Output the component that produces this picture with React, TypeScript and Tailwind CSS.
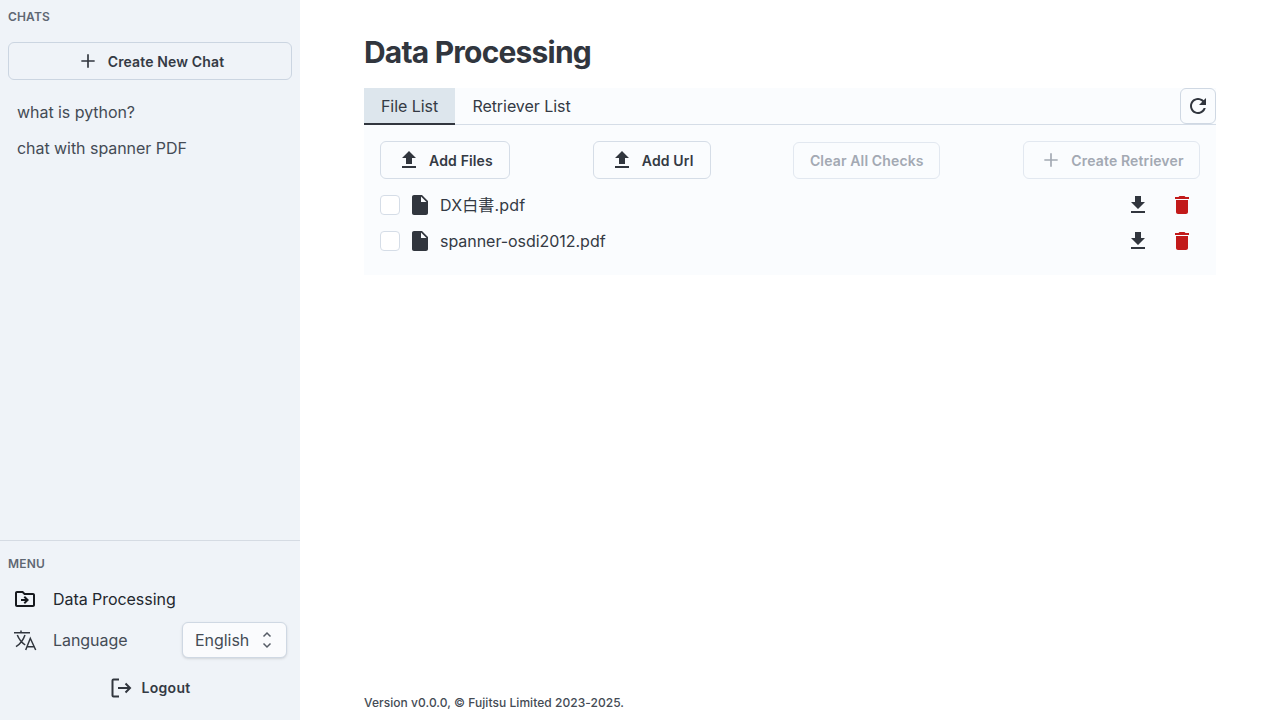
const P = {
  upload: "M9 16h6v-6h4l-7-7-7 7h4v6zm-4 2h14v2H5v-2z",
  download: "M19 9h-4V3H9v6H5l7 7 7-7zM5 18v2h14v-2H5z",
  del: "M6 19c0 1.1.9 2 2 2h8c1.1 0 2-.9 2-2V7H6v12zM19 4h-3.5l-1-1h-5l-1 1H5v2h14V4z",
  file: "M6 2c-1.1 0-1.99.9-1.99 2L4 20c0 1.1.89 2 1.99 2H18c1.1 0 2-.9 2-2V8l-6-6H6zm7 7V3.5L18.5 9H13z",
  refresh: "M17.65 6.35C16.2 4.9 14.21 4 12 4c-4.42 0-7.99 3.58-7.99 8s3.57 8 7.99 8c3.73 0 6.84-2.55 7.73-6h-2.08c-.82 2.33-3.04 4-5.65 4-3.31 0-6-2.69-6-6s2.69-6 6-6c1.66 0 3.14.69 4.22 1.78L13 11h7V4l-2.35 2.35z",
  folder: "M20 6h-8l-2-2H4c-1.1 0-1.99.9-1.99 2L2 18c0 1.1.9 2 2 2h16c1.1 0 2-.9 2-2V8c0-1.1-.9-2-2-2zm0 12H4V6h5.17l2 2H20v10zm-8.01-9l-1.41 1.41L12.16 12H8v2h4.16l-1.59 1.59L11.99 17 16 13.01 11.99 9z",
};

function Icon({ d, className }: { d: string; className: string }) {
  return (
    <svg viewBox="0 0 24 24" fill="currentColor" className={className}>
      <path d={d} />
    </svg>
  );
}

function Plus({ className }: { className: string }) {
  return (
    <svg viewBox="0 0 24 24" fill="none" stroke="currentColor" strokeWidth="2" className={className}>
      <path d="M12 4v16M4 12h16" />
    </svg>
  );
}

function FileRow({ name, className }: { name: string; className: string }) {
  return (
    <div className="flex items-center h-9">
      <span className="w-5 h-5 rounded-[4px] border border-[#d5dde7] bg-white" />
      <Icon d={P.file} className="w-6 h-6 ml-[8px] text-[#31363e]" />
      <span className={"ml-[8px] text-base text-[#343a44] " + className}>{name}</span>
      <span className="ml-auto mr-[6px] flex items-center gap-5">
        <Icon d={P.download} className="w-6 h-6 text-[#31363e]" />
        <Icon d={P.del} className="w-6 h-6 text-[#c21a1a]" />
      </span>
    </div>
  );
}

export default function App() {
  return (
    <div
      className="flex w-[1280px] h-[720px] overflow-hidden bg-white text-[#343a44] tracking-[-0.05px]"
      style={{ fontFamily: "Inter, 'Noto Sans CJK SC', sans-serif" }}
    >
      <aside className="w-[300px] h-full shrink-0 flex flex-col bg-[#eff3f8]">
        <div className="flex-1 px-2 pt-[10px]">
          <div className="text-xs leading-[14px] font-semibold text-[#5f6773] tracking-[0.15px]">CHATS</div>
          <button className="mt-[18px] w-full h-[38px] flex items-center justify-center gap-2.5 pl-0.5 rounded-md border border-[#cbd5e1] text-sm font-semibold tracking-[0.14px] text-[#343a44]">
            <Plus className="w-5 h-5 text-[#31363e]" />
            <span className="pt-px">Create New Chat</span>
          </button>
          <div className="mt-[14px] px-[9px] text-base leading-9 text-[#444b55]">
            <div>what is python?</div>
            <div>chat with spanner PDF</div>
          </div>
        </div>
        <div className="h-[180px] border-t border-[#d5dbe3] px-2 pt-4">
          <div className="text-xs leading-[14px] font-semibold text-[#5f6773] tracking-[0.15px]">MENU</div>
          <div className="mt-[8px] flex items-center h-[40px] px-[5px] gap-[16px] text-base text-[#23272e]">
            <Icon d={P.folder} className="w-6 h-6 text-[#16191e]" />
            Data Processing
          </div>
          <div className="mt-[3px] flex items-center h-[36px] px-[5px] gap-[16px] text-base text-[#444b55]">
            <svg viewBox="0 0 24 24" fill="none" stroke="currentColor" strokeWidth="1.5" className="w-6 h-6 text-[#31363e]">
              <path d="M1 4.8h16M8 2.5v2.3M12 7c-1.6 4.6-4.6 9-9 11.7M4.3 7c1.6 4 4.4 7.6 7.9 10M12.7 22l4.6-11.7L22.7 22M14.2 18.7h7" />
            </svg>
            Language
            <button className="ml-auto w-[105px] h-[36px] flex items-center justify-between pl-3 pr-[14px] rounded-md border border-[#cfd8e3] bg-[#fafbfd] text-base text-[#444b55] shadow-sm">
              English
              <svg viewBox="0 0 10 18" fill="none" stroke="currentColor" strokeWidth="1.5" className="w-[10px] h-[18px] text-[#555c66]">
                <path d="M1.5 5.5 5 2l3.5 3.5M1.5 12.5 5 16l3.5-3.5" />
              </svg>
            </button>
          </div>
          <button className="mt-[12px] w-full h-[36px] flex items-center justify-center gap-2 text-sm font-semibold tracking-[0.3px] text-[#343a44]">
            <svg viewBox="0 0 24 24" fill="none" stroke="currentColor" strokeWidth="2" className="w-6 h-6 text-[#31363e]">
              <path d="M10 3.5H4.5a1 1 0 0 0-1 1v15a1 1 0 0 0 1 1H10M9 12h12M16.5 7.5 21 12l-4.5 4.5" />
            </svg>
            Logout
          </button>
        </div>
      </aside>
      <main className="flex-1 flex flex-col px-16">
        <h1 className="mt-[32px] text-[30px] leading-10 font-bold tracking-[-0.8px] text-[#31363e]">Data Processing</h1>
        <section className="mt-[16px] bg-[#fafcfe]">
          <div className="flex items-stretch h-[37px] border-b border-[#d5dde7]">
            <div className="w-[91px] flex items-center justify-center bg-[#dde6ed] border-b-2 border-[#31363e] -mb-px text-base text-[#343a44]">File List</div>
            <div className="w-[133px] flex items-center justify-center text-base text-[#343a44]">Retriever List</div>
            <button className="ml-auto w-9 h-9 flex items-center justify-center rounded-md border border-[#cfd8e3] bg-[#fafcfe]">
              <Icon d={P.refresh} className="w-6 h-6 text-[#31363e]" />
            </button>
          </div>
          <div className="px-4 pt-4 pb-4">
            <div className="flex items-center justify-between text-sm font-semibold tracking-[0.14px]">
              <button className="w-[130px] h-[38px] flex items-center justify-center gap-2 rounded-md border border-[#d5dde7] text-[#343a44]">
                <Icon d={P.upload} className="w-6 h-6 text-[#31363e]" />
                <span className="pt-px">Add Files</span>
              </button>
              <button className="w-[118px] h-[38px] flex items-center justify-center gap-2 rounded-md border border-[#d5dde7] text-[#343a44]">
                <Icon d={P.upload} className="w-6 h-6 text-[#31363e]" />
                <span className="pt-px">Add Url</span>
              </button>
              <button className="w-[147px] h-[37px] flex items-center justify-center rounded-md border border-[#e2e8f0] text-[#a3a9b3]">
                <span className="pt-px">Clear All Checks</span>
              </button>
              <button className="w-[177px] h-[38px] flex items-center justify-center gap-2.5 pl-0.5 rounded-md border border-[#e2e8f0] text-[#a3a9b3]">
                <Plus className="w-5 h-5" />
                <span className="pt-px">Create Retriever</span>
              </button>
            </div>
            <div className="mt-2">
              <FileRow name="DX白書.pdf" className="tracking-[0.15px]" />
              <FileRow name="spanner-osdi2012.pdf" className="tracking-[-0.04px]" />
            </div>
          </div>
        </section>
        <div className="mt-auto pb-[9px] text-xs leading-4 font-medium tracking-[0.05px] text-[#444b55]">Version v0.0.0, © Fujitsu Limited 2023-2025.</div>
      </main>
    </div>
  );
}
